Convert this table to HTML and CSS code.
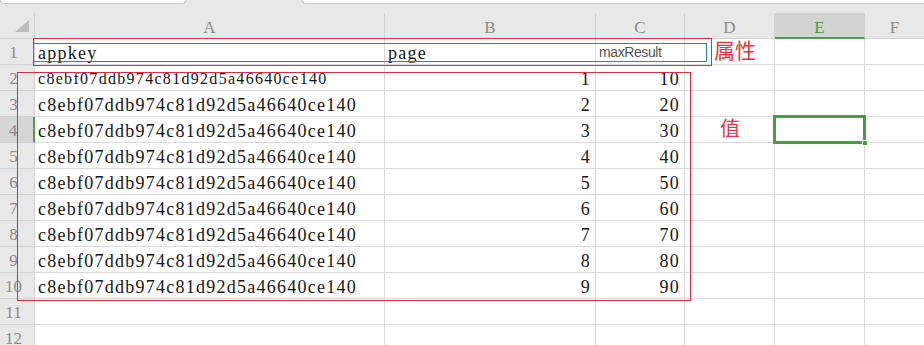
FILE: index.html
```html
<!DOCTYPE html>
<html lang="zh-CN">
<head>
<meta charset="utf-8">
<title>Sheet</title>
<link rel="stylesheet" href="styles.css">
</head>
<body>
<div class="app">
  <div class="topbar">
    <div class="tb-box tb-name"></div>
    <div class="tb-box tb-formula"></div>
  </div>
  <div class="sheet">
    <div class="corner"><span class="tri"></span></div>
    <div class="ch">A</div>
    <div class="ch">B</div>
    <div class="ch">C</div>
    <div class="ch">D</div>
    <div class="ch ch-sel">E</div>
    <div class="ch ch-last">F</div>

    <div class="rh">1</div>
    <div class="c">appkey</div>
    <div class="c">page</div>
    <div class="c c-sans">maxResult</div>
    <div class="c"></div><div class="c"></div><div class="c c-last"></div>

    <div class="rh">2</div>
    <div class="c c-small">c8ebf07ddb974c81d92d5a46640ce140</div>
    <div class="c num">1</div><div class="c num">10</div>
    <div class="c"></div><div class="c"></div><div class="c c-last"></div>

    <div class="rh">3</div>
    <div class="c">c8ebf07ddb974c81d92d5a46640ce140</div>
    <div class="c num">2</div><div class="c num">20</div>
    <div class="c"></div><div class="c"></div><div class="c c-last"></div>

    <div class="rh rh-sel">4</div>
    <div class="c">c8ebf07ddb974c81d92d5a46640ce140</div>
    <div class="c num">3</div><div class="c num">30</div>
    <div class="c"></div><div class="c"></div><div class="c c-last"></div>

    <div class="rh">5</div>
    <div class="c">c8ebf07ddb974c81d92d5a46640ce140</div>
    <div class="c num">4</div><div class="c num">40</div>
    <div class="c"></div><div class="c"></div><div class="c c-last"></div>

    <div class="rh">6</div>
    <div class="c">c8ebf07ddb974c81d92d5a46640ce140</div>
    <div class="c num">5</div><div class="c num">50</div>
    <div class="c"></div><div class="c"></div><div class="c c-last"></div>

    <div class="rh">7</div>
    <div class="c">c8ebf07ddb974c81d92d5a46640ce140</div>
    <div class="c num">6</div><div class="c num">60</div>
    <div class="c"></div><div class="c"></div><div class="c c-last"></div>

    <div class="rh">8</div>
    <div class="c">c8ebf07ddb974c81d92d5a46640ce140</div>
    <div class="c num">7</div><div class="c num">70</div>
    <div class="c"></div><div class="c"></div><div class="c c-last"></div>

    <div class="rh">9</div>
    <div class="c">c8ebf07ddb974c81d92d5a46640ce140</div>
    <div class="c num">8</div><div class="c num">80</div>
    <div class="c"></div><div class="c"></div><div class="c c-last"></div>

    <div class="rh">10</div>
    <div class="c">c8ebf07ddb974c81d92d5a46640ce140</div>
    <div class="c num">9</div><div class="c num">90</div>
    <div class="c"></div><div class="c"></div><div class="c c-last"></div>

    <div class="rh">11</div>
    <div class="c"></div><div class="c"></div><div class="c"></div>
    <div class="c"></div><div class="c"></div><div class="c c-last"></div>

    <div class="rh">12</div>
    <div class="c"></div><div class="c"></div><div class="c"></div>
    <div class="c"></div><div class="c"></div><div class="c c-last"></div>

    <div class="mark mark-attr"></div>
    <div class="mark mark-teal"></div>
    <div class="mark mark-vals"></div>
    <div class="note note-attr">属性</div>
    <div class="note note-val">值</div>
    <div class="sel"><span class="handle"></span></div>
  </div>
</div>
</body>
</html>
```
FILE: styles.css
```css
* { box-sizing: border-box; }
html, body { margin: 0; padding: 0; background: #ffffff; }
.app {
  width: 924px;
  height: 345px;
  overflow: hidden;
  background: #e8e8e8;
}
.topbar {
  display: flex;
  height: 13px;
  align-items: flex-start;
}
.tb-box {
  height: 4px;
  background: #ffffff;
  border: 1px solid #c9c9c9;
  border-top: none;
  border-radius: 0 0 4px 4px;
}
.tb-name { width: 186px; }
.tb-formula { margin-left: 116px; flex: 1; border-right: none; border-radius: 0 0 0 4px; }

.sheet {
  position: relative;
  display: grid;
  grid-template-columns: 35px 350px 211px 89px 90px 90px 1fr;
  grid-auto-rows: 26px;
  background: #ffffff;
}
.corner, .ch, .rh {
  background: #e8e8e8;
  border-right: 1px solid #d2d2d2;
  border-bottom: 1px solid #d2d2d2;
  color: #8a8a8a;
  font-family: "Liberation Serif", serif;
  font-size: 17px;
}
.corner { position: relative; }
.tri {
  position: absolute;
  left: 15px;
  top: 7px;
  width: 0;
  height: 0;
  border-left: 14px solid transparent;
  border-bottom: 12px solid #bdbdbd;
}
.ch {
  display: flex;
  align-items: center;
  justify-content: center;
  padding-top: 4px;
}
.ch-last { border-right: none; }
.ch-sel {
  background: #d3d3d3;
  color: #3f9a3f;
  border-bottom: 2px solid #4c9f4a;
  padding-top: 6px;
}
.rh {
  display: flex;
  align-items: center;
  justify-content: center;
  padding-right: 7px;
  padding-top: 3px;
}
.rh-sel {
  background: #d6d6d6;
  border-right: 2px solid #4c9f4a;
  color: #8a8a8a;
}
.c {
  border-right: 1px solid #dadada;
  border-bottom: 1px solid #dadada;
  font-family: "Liberation Serif", serif;
  font-size: 18px;
  letter-spacing: 1.25px;
  color: #161616;
  padding: 4px 3px 0 3px;
  display: flex;
  align-items: center;
  white-space: nowrap;
  overflow: visible;
}
.c-last { border-right: none; }
.c-small { font-size: 16px; letter-spacing: 1.3px; padding-top: 3px; }
.c-sans {
  font-family: "Liberation Sans", sans-serif;
  font-size: 14px;
  letter-spacing: -0.4px;
  color: #555555;
  padding-top: 0;
}
.num { justify-content: flex-end; padding-right: 4px; }

.mark { position: absolute; pointer-events: none; }
.mark-attr {
  left: 33px; top: 25px;
  width: 679px; height: 28px;
  border: 1px solid #e0303f;
}
.mark-teal {
  left: 33px; top: 30px;
  width: 674px; height: 19px;
  border: 1px solid #2a8a8f;
}
.mark-vals {
  left: 17px; top: 59px;
  width: 674px; height: 229px;
  border: 1px solid #d8303f;
}
.note {
  position: absolute;
  font-family: "Noto Sans CJK SC", sans-serif;
  color: #e8343a;
  line-height: 1;
}
.note-attr { left: 714px; top: 26px; font-size: 21px; }
.note-val { left: 720px; top: 105px; font-size: 20px; }
.sel {
  position: absolute;
  left: 773px; top: 102px;
  width: 93px; height: 29px;
  border: 3px solid #4a9a46;
}
.handle {
  position: absolute;
  right: -5px; bottom: -5px;
  width: 6px; height: 6px;
  background: #4a9a46;
  border: 1px solid #ffffff;
}
```
